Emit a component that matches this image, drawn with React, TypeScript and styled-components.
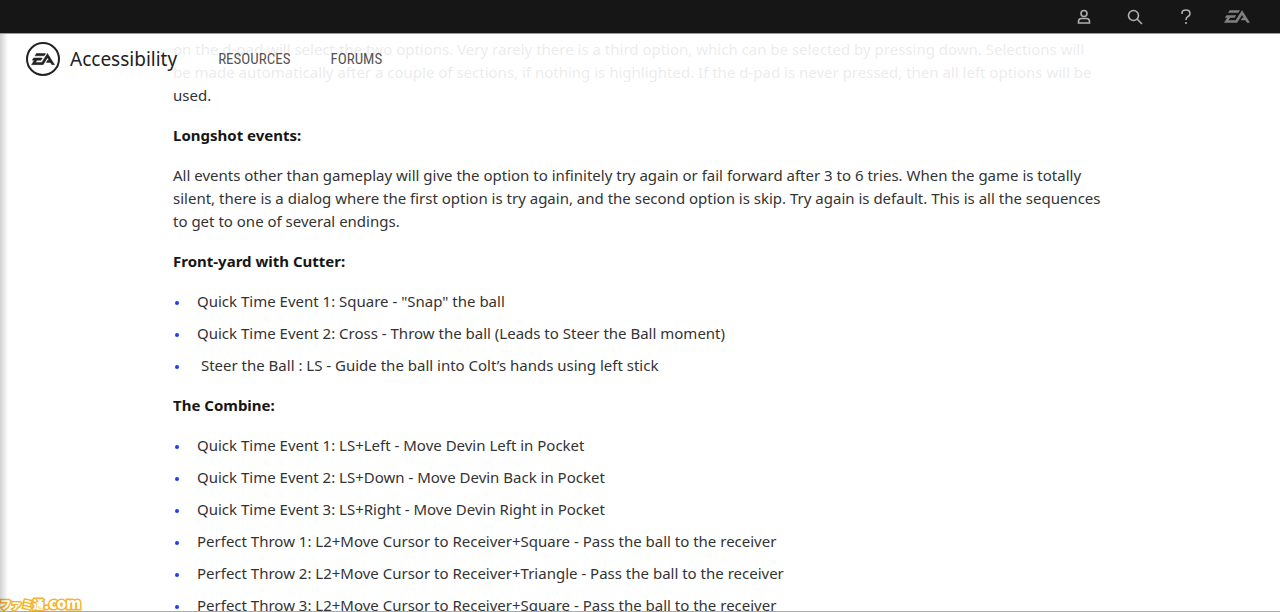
import React from "react";
import styled, { createGlobalStyle } from "styled-components";

const Global = createGlobalStyle`
  *, *::before, *::after { box-sizing: border-box; }
  html, body { margin: 0; height: 100%; overflow: hidden; background: #fff; }
  body { font-family: "Noto Sans", "Noto Sans CJK JP", sans-serif; color: #333; }
  #root { height: 100%; }
`;

const Page = styled.div`
  position: relative;
  height: 100%;
  overflow: hidden;
  border-bottom: 1px solid #aaa;
`;

const EdgeShade = styled.div`
  position: absolute;
  inset: 34px auto 0 0;
  z-index: 2;
  width: 8px;
  background: linear-gradient(to right, rgba(0, 0, 0, 0.18), rgba(0, 0, 0, 0));
`;

const Header = styled.header`
  position: absolute;
  inset: 0 0 auto 0;
  z-index: 1;
`;

const TopBar = styled.div`
  height: 34px;
  background: #161616;
  border-bottom: 1px solid #999;
  display: flex;
  justify-content: flex-end;
  align-items: center;
  padding-right: 30px;
  gap: 25px;
`;

const IconButton = styled.button`
  width: 26px;
  height: 18px;
  padding: 0;
  border: 0;
  background: none;
  color: #b0b0b0;
  display: flex;
  align-items: center;
  justify-content: center;
  svg { display: block; fill: none; stroke: currentColor; stroke-width: 1.6; }
`;

const NetworkLink = styled.a`
  display: block;
  color: #808080;
  svg { display: block; }
`;

const SiteNav = styled.nav`
  height: 50px;
  display: flex;
  align-items: center;
  padding-left: 26px;
  background: rgba(255, 255, 255, 0.9);
`;

const Brand = styled.a`
  display: flex;
  align-items: center;
  gap: 10px;
  margin-right: 41px;
  color: #222;
  text-decoration: none;
  font-size: 19px;
  line-height: 28px;
`;

const NavLink = styled.a`
  margin-right: 40px;
  color: #555;
  text-decoration: none;
  font-family: "Roboto Condensed", "Roboto", sans-serif;
  font-size: 15px;
  line-height: 24px;
`;

const Article = styled.main`
  padding: 38px 173px 0;
  font-size: 15px;
  line-height: 23px;
  white-space: nowrap;
`;

const Paragraph = styled.p`
  margin: 0 0 17px;
`;

const Heading = styled.h2`
  margin: 0 0 17px;
  font-size: 15px;
  line-height: 23px;
  font-weight: 700;
  color: #161616;
`;

const Steps = styled.ul`
  margin: 0 0 17px;
  padding: 0;
  list-style: none;
  display: flex;
  flex-direction: column;
  gap: 9px;
`;

const Step = styled.li`
  display: flex;
  align-items: center;
  white-space: pre;
  &::before {
    content: "";
    width: 4px;
    height: 4px;
    margin: 2px 18px 0 2px;
    border-radius: 50%;
    background: #1c3cf5;
  }
`;

const Watermark = styled.div`
  position: absolute;
  left: 0;
  bottom: 0;
  display: flex;
  align-items: baseline;
  font-family: "Noto Sans CJK JP", sans-serif;
  font-weight: 900;
  font-size: 11px;
  line-height: 14px;
  color: #fff;
  -webkit-text-stroke: 3px #f6b32c;
  paint-order: stroke fill;
`;

const WatermarkDomain = styled.span`
  font-size: 15px;
`;

const EaMark = () => (
  <path d="M16.635 6.162l-5.928 9.377H4.24l1.508-2.3h4.024l1.474-2.335H2.264L.79 13.239h2.156L0 17.84h12.072l4.563-7.259 1.652 2.66h-1.401l-1.473 2.299h4.347l1.473 2.3H24zm-11.461.107L3.7 8.604l9.52-.035 1.474-2.3z" />
);

const cutter = [
  'Quick Time Event 1: Square - "Snap" the ball',
  "Quick Time Event 2: Cross - Throw the ball (Leads to Steer the Ball moment)",
  " Steer the Ball : LS - Guide the ball into Colt’s hands using left stick",
];

const combine = [
  "Quick Time Event 1: LS+Left - Move Devin Left in Pocket",
  "Quick Time Event 2: LS+Down - Move Devin Back in Pocket",
  "Quick Time Event 3: LS+Right - Move Devin Right in Pocket",
  "Perfect Throw 1: L2+Move Cursor to Receiver+Square - Pass the ball to the receiver",
  "Perfect Throw 2: L2+Move Cursor to Receiver+Triangle - Pass the ball to the receiver",
  "Perfect Throw 3: L2+Move Cursor to Receiver+Square - Pass the ball to the receiver",
];

const StepList = ({ items }: { items: string[] }) => (
  <Steps>
    {items.map((item) => (
      <Step key={item}>{item}</Step>
    ))}
  </Steps>
);

export default function App() {
  return (
    <Page>
      <Global />
      <Header>
        <TopBar>
          <IconButton aria-label="Account">
            <svg width="14" height="16" viewBox="0 0 14 16">
              <circle cx="7" cy="4.500" r="3" />
              <path d="M1.500 14V12.500Q1.500 9.500 4.500 9.500H9.500Q12.500 9.500 12.500 12.500V14Z" />
            </svg>
          </IconButton>
          <IconButton aria-label="Search">
            <svg width="16" height="16" viewBox="0 0 16 16">
              <circle cx="6.500" cy="6.500" r="5" />
              <path d="M10 10L15 15" />
            </svg>
          </IconButton>
          <IconButton aria-label="Help">
            <svg width="10" height="16" viewBox="0 0 10 16">
              <path d="M1 5V4Q1 1 5 1Q9 1 9 4.500Q9 6.500 7 7.500Q5 8.500 5 11M5 13V15" />
            </svg>
          </IconButton>
          <NetworkLink href="#" aria-label="Electronic Arts">
            <svg width="26" height="13" viewBox="0 6 24 12" fill="currentColor">
              <EaMark />
            </svg>
          </NetworkLink>
        </TopBar>
        <SiteNav>
          <Brand href="#">
            <svg width="34" height="34" viewBox="0 0 34 34" fill="#222">
              <circle cx="17" cy="17" r="16" fill="#fff" stroke="#222" strokeWidth="2" />
              <g transform="translate(5.500 5.500) scale(.96)" stroke="#222" strokeWidth=".5">
                <EaMark />
              </g>
            </svg>
            Accessibility
          </Brand>
          <NavLink href="#">RESOURCES</NavLink>
          <NavLink href="#">FORUMS</NavLink>
        </SiteNav>
      </Header>
      <Article>
        <Paragraph>
          on the d-pad will select the two options. Very rarely there is a third option, which can be selected by pressing down. Selections will
          <br />
          be made automatically after a couple of sections, if nothing is highlighted. If the d-pad is never pressed, then all left options will be
          <br />
          used.
        </Paragraph>
        <Heading>Longshot events:</Heading>
        <Paragraph>
          All events other than gameplay will give the option to infinitely try again or fail forward after 3 to 6 tries. When the game is totally
          <br />
          silent, there is a dialog where the first option is try again, and the second option is skip. Try again is default. This is all the sequences
          <br />
          to get to one of several endings.
        </Paragraph>
        <Heading>Front-yard with Cutter:</Heading>
        <StepList items={cutter} />
        <Heading>The Combine:</Heading>
        <StepList items={combine} />
      </Article>
      <EdgeShade />
      <Watermark>
        ファミ通<WatermarkDomain>.com</WatermarkDomain>
      </Watermark>
    </Page>
  );
}
